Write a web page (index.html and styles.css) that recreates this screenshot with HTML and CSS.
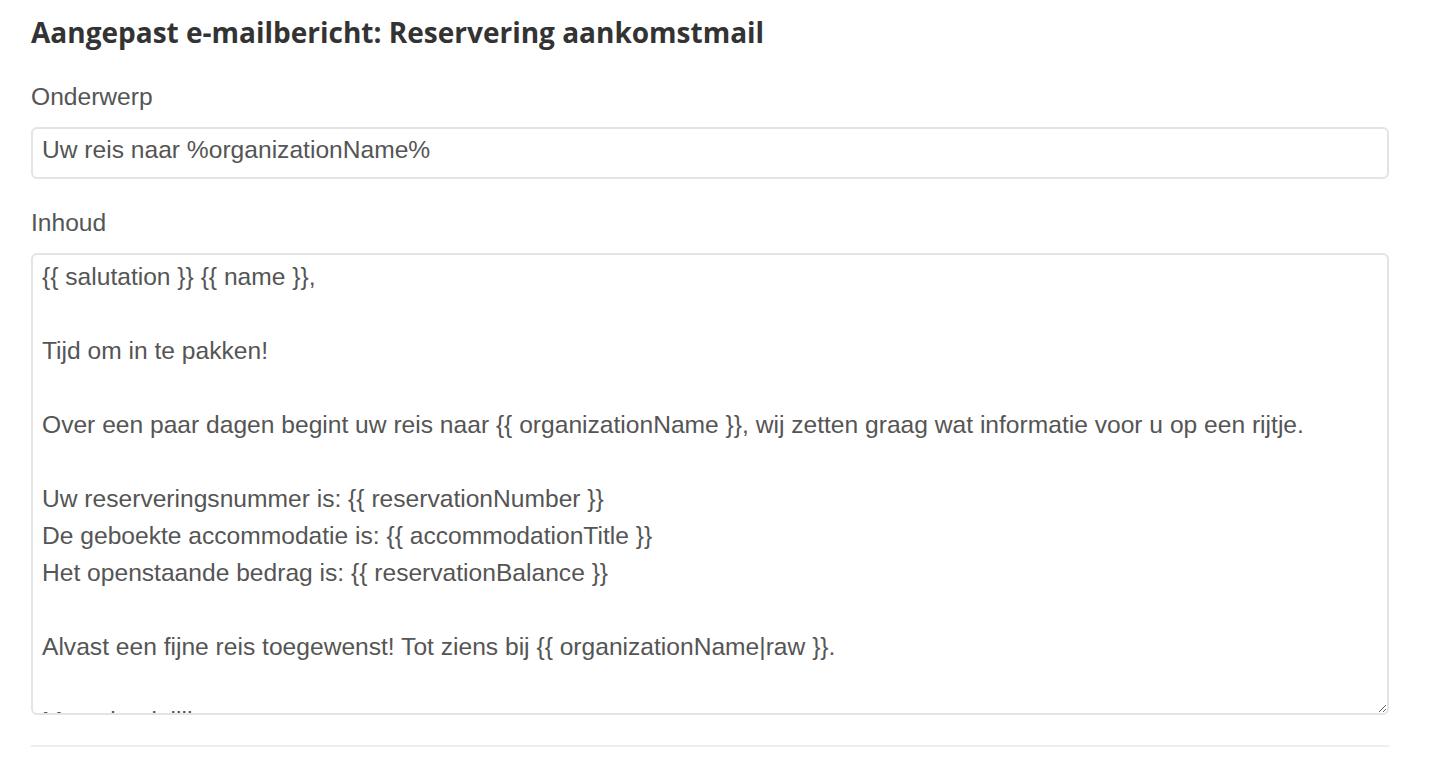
FILE: index.html
```html
<!DOCTYPE html>
<html lang="nl">
<head>
<meta charset="utf-8">
<title>Aangepast e-mailbericht</title>
<link rel="stylesheet" href="styles.css">
</head>
<body>
<div class="page">
  <h2 class="title">Aangepast e-mailbericht: Reservering aankomstmail</h2>
  <div class="form-group">
    <label class="label" for="subject">Onderwerp</label>
    <input class="control" id="subject" type="text" value="Uw reis naar %organizationName%">
  </div>
  <div class="form-group">
    <label class="label" for="body">Inhoud</label>
    <textarea class="control area" id="body">{{ salutation }} {{ name }},

Tijd om in te pakken!

Over een paar dagen begint uw reis naar {{ organizationName }}, wij zetten graag wat informatie voor u op een rijtje.

Uw reserveringsnummer is: {{ reservationNumber }}
De geboekte accommodatie is: {{ accommodationTitle }}
Het openstaande bedrag is: {{ reservationBalance }}

Alvast een fijne reis toegewenst! Tot ziens bij {{ organizationName|raw }}.

Met vriendelijke groet,
{{ organizationName }}</textarea>
  </div>
  <hr class="rule">
</div>
</body>
</html>
```

FILE: styles.css
```css
html, body {
  margin: 0;
  padding: 0;
  background: #ffffff;
}
.page {
  padding: 15px 52px 0 31px;
  font-family: "Liberation Sans", Arial, sans-serif;
  color: #555555;
}
.title {
  margin: 0 0 30px 0;
  font-family: "Open Sans", "Liberation Sans", sans-serif;
  font-weight: 700;
  font-size: 28px;
  line-height: 34px;
  color: #333333;
}
.form-group {
  margin-bottom: 26px;
}
.label {
  display: block;
  font-size: 24.6px;
  line-height: 35px;
  margin-bottom: 13px;
  color: #555555;
}
.control {
  display: block;
  box-sizing: border-box;
  width: 100%;
  margin: 0;
  border: 2px solid #e4e4e4;
  border-radius: 6px;
  background: #ffffff;
  font-family: "Liberation Sans", Arial, sans-serif;
  font-size: 24.6px;
  line-height: 37px;
  color: #555555;
  outline: none;
}
input.control {
  height: 52px;
  padding: 0 9px 6px 9px;
}
.area {
  height: 462px;
  padding: 3px 9px 10px 9px;
  resize: vertical;
  overflow: hidden;
}
.rule {
  margin: 30px 0 0 0;
  border: 0;
  border-top: 2px solid #eeeeee;
}
```
